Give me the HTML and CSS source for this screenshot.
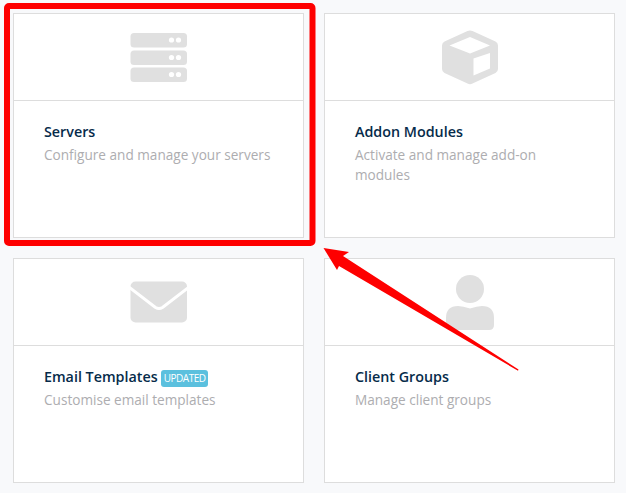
FILE: index.html
```html
<!DOCTYPE html>
<html lang="en">
<head>
<meta charset="utf-8">
<title>Setup</title>
<link rel="stylesheet" href="styles.css">
</head>
<body>
<main class="grid">
  <article class="card">
    <div class="card-icon">
      <svg class="icon" width="58" height="52" viewBox="0 -2 58 52">
        <rect x="0.500" y="0" width="56.500" height="14.500" rx="3.500"/>
        <rect x="0.500" y="17.500" width="56.500" height="14.500" rx="3.500"/>
        <rect x="0.500" y="34.500" width="56.500" height="14.500" rx="3.500"/>
        <g class="cut">
          <circle cx="41.500" cy="7" r="2.600"/><circle cx="48.500" cy="7" r="2.600"/>
          <circle cx="41.500" cy="24.500" r="2.600"/><circle cx="48.500" cy="24.500" r="2.600"/>
          <circle cx="41.500" cy="41.500" r="2.600"/><circle cx="48.500" cy="41.500" r="2.600"/>
        </g>
      </svg>
    </div>
    <div class="card-body">
      <h3 class="card-title">Servers</h3>
      <p class="card-text">Configure and manage your servers</p>
    </div>
  </article>
  <article class="card">
    <div class="card-icon">
      <svg class="icon" width="56" height="55" viewBox="0 0 56 55">
        <path d="M25.500 1 Q28 0 30.500 1 L53.500 11.500 Q56 13 56 15.500 V39 Q56 41.500 53.500 43 L30.500 53.500 Q28 54.800 25.500 53.500 L2.500 43 Q0 41.500 0 39 V15.500 Q0 13 2.500 11.500 Z"/>
        <path class="cut" d="M28 7 L48 15.500 L28 23.500 L7.500 15.500 Z"/>
        <path class="cut" d="M31.500 28.500 L48 23 V38.500 L31.500 45.500 Z"/>
      </svg>
    </div>
    <div class="card-body">
      <h3 class="card-title">Addon Modules</h3>
      <p class="card-text">Activate and manage add-on modules</p>
    </div>
  </article>
  <article class="card">
    <div class="card-icon">
      <svg class="icon" width="58" height="42" viewBox="0 0 58 42">
        <rect x="0.500" y="0.500" width="56.500" height="41" rx="5"/>
        <path class="fold" d="M-1 6 L25.500 26.500 Q29 28.500 32.500 26.500 L59 6"/>
      </svg>
    </div>
    <div class="card-body">
      <h3 class="card-title">Email Templates <span class="badge">Updated</span></h3>
      <p class="card-text">Customise email templates</p>
    </div>
  </article>
  <article class="card">
    <div class="card-icon">
      <svg class="icon" width="50" height="56" viewBox="0 0 50 56">
        <circle cx="25" cy="15" r="14"/>
        <path d="M1 44 Q1 32 13 32 Q18 32 25 34.500 Q32 32 37 32 Q49 32 49 44 V51 Q49 56 44 56 H6 Q1 56 1 51 Z"/>
      </svg>
    </div>
    <div class="card-body">
      <h3 class="card-title">Client Groups</h3>
      <p class="card-text">Manage client groups</p>
    </div>
  </article>
</main>
<svg class="annotation" width="626" height="493" viewBox="0 0 626 493" aria-hidden="true">
  <rect class="annotation-box" x="7" y="6" width="305.500" height="237" rx="2"/>
  <polygon class="annotation-arrow" points="323.500,248 349,252 343,256 518.500,369.500 518,370.800 339,266 337,270"/>
</svg>
</body>
</html>
```

FILE: styles.css
```css
* {
  box-sizing: border-box;
}

html,
body {
  height: 100%;
}

body {
  margin: 0;
  background: #f8f9fb;
  font-family: "Open Sans", "Liberation Sans", sans-serif;
  overflow: hidden;
}

.grid {
  display: grid;
  grid-template-columns: 291px 291px;
  grid-auto-rows: 225px;
  gap: 20px;
  padding: 13px 0 0 13px;
}

.card {
  display: flex;
  flex-direction: column;
  background: #fff;
  border: 1px solid #ddd;
}

.card-icon {
  display: flex;
  align-items: center;
  justify-content: center;
  height: 87px;
  flex: none;
  border-bottom: 1px solid #ddd;
}

.icon {
  display: block;
  fill: #e0e0e0;
}

.cut {
  fill: #fff;
}

.fold {
  fill: none;
  stroke: #fff;
  stroke-width: 3;
}

.card-body {
  padding: 21px 30px 0;
}

.card-title {
  margin: 0 0 3px;
  font-size: 14.300px;
  font-weight: 600;
  line-height: 20px;
  color: #062b4a;
}

.card-text {
  margin: 0;
  font-size: 13.600px;
  line-height: 19.500px;
  color: #adadb0;
}

.badge {
  display: inline-block;
  height: 17px;
  padding: 0 2.500px;
  border-radius: 3px;
  background: #5bc0de;
  color: #fff;
  font-size: 10px;
  font-weight: 400;
  letter-spacing: -0.500px;
  line-height: 17px;
  text-transform: uppercase;
}

.annotation {
  position: absolute;
  top: 0;
  left: 0;
  pointer-events: none;
}

.annotation-box {
  fill: none;
  stroke: #fe0000;
  stroke-width: 6;
}

.annotation-arrow {
  fill: #fe0000;
}
```
